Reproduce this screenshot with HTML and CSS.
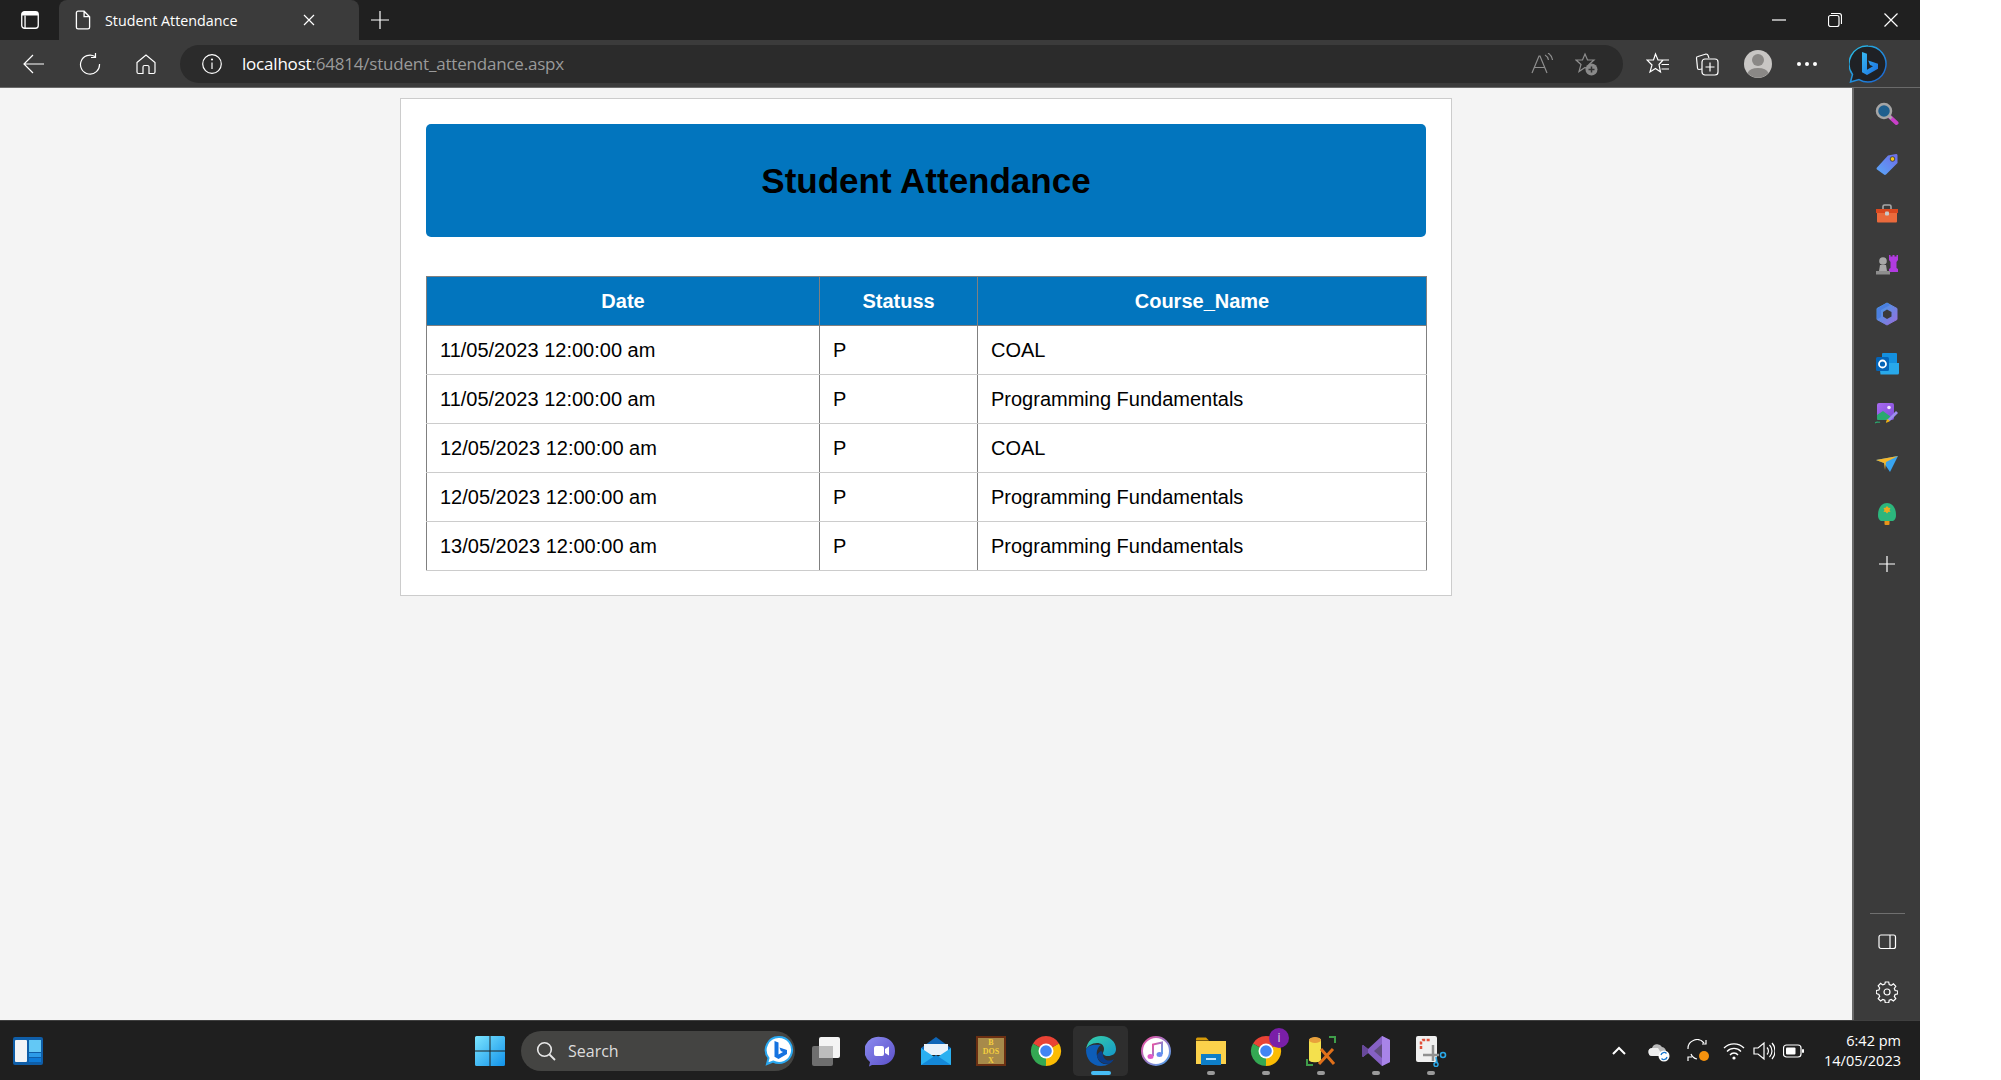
FILE: index.html
```html
<!DOCTYPE html>
<html lang="en">
<head>
<meta charset="utf-8">
<title>Student Attendance</title>
<link rel="stylesheet" href="styles.css">
</head>
<body>
<div class="window">
  <header class="titlebar">
    <div class="tab-actions">
      <svg class="ic22" viewBox="0 0 20 20"><rect x="2.5" y="2.5" width="15" height="15" rx="2.5" class="ln"/><path d="M2.5 6h15V5a2.5 2.5 0 0 0-2.5-2.500H5A2.500 2.500 0 0 0 2.500 5z" fill="#fff"/><path d="M5.500 6v11.500" class="ln"/></svg>
    </div>
    <div class="tab">
      <svg class="ic22" viewBox="0 0 20 20"><path d="M4 3.500A1.500 1.500 0 0 1 5.500 2H11l5 5v9.500a1.500 1.500 0 0 1-1.500 1.500h-9A1.500 1.500 0 0 1 4 16.500zM11 2v5h5" class="ln"/></svg>
      <span class="tab-title">Student Attendance</span>
      <svg class="tab-close" viewBox="0 0 12 12"><path d="M1 1l10 10M11 1L1 11" class="ln"/></svg>
    </div>
    <svg class="new-tab" viewBox="0 0 18 18"><path d="M9 0v18M0 9h18" class="ln"/></svg>
    <div class="win-controls">
      <span class="win-btn"><svg class="ic14" viewBox="0 0 14 14"><path d="M0 7h14" class="ln"/></svg></span>
      <span class="win-btn"><svg class="ic14" viewBox="0 0 14 14"><rect x=".5" y="2.500" width="10.500" height="11" rx="2" class="ln"/><path d="M3 .5h8a2.500 2.500 0 0 1 2.500 2.500v8" class="ln"/></svg></span>
      <span class="win-btn close"><svg class="ic14" viewBox="0 0 14 14"><path d="M.5.5l13 13M13.500.5l-13 13" class="ln"/></svg></span>
    </div>
  </header>

  <nav class="toolbar">
    <div class="nav-btns">
      <span class="nav-btn"><svg class="ic22" viewBox="0 0 22 22"><path d="M21 11H1.500M10 2l-9 9 9 9" class="ln"/></svg></span>
      <span class="nav-btn"><svg class="ic22" viewBox="0 0 22 22"><path d="M16 3.500A9.500 9.500 0 1 0 20.500 11M16.500 0v4.500H12" class="ln"/></svg></span>
      <span class="nav-btn"><svg class="ic22" viewBox="0 0 22 22"><path d="M2 9.500L11 2l9 7.500V19a1.500 1.500 0 0 1-1.500 1.500H14V14a1.500 1.500 0 0 0-1.500-1.500h-3A1.500 1.500 0 0 0 8 14v6.500H3.500A1.500 1.500 0 0 1 2 19z" class="ln"/></svg></span>
    </div>
    <div class="address">
      <svg class="ic20" viewBox="0 0 20 20"><circle cx="10" cy="10" r="9.300" class="ln"/><path d="M10 8.500V15" class="ln"/><circle cx="10" cy="5.500" r="1.100" fill="#fff"/></svg>
      <span class="url"><span class="url-host">localhost</span>:64814/student_attendance.aspx</span>
      <span class="addr-end">
        <svg class="ic22" viewBox="0 0 22 22"><path d="M1 20L8 3h1l7 17M3.500 14.500h10.500M14 2c2 1 3 2.500 3.500 5M17 0c2.500 1.500 4 4 4.500 7" class="ln dim"/></svg>
        <svg class="ic24" viewBox="0 0 24 24"><path d="M10 2l2.500 6H19l-5 4.500 1.500 6.500L10 15.500 4 19.500l2-7L1 8h6.500z" class="ln dim"/><circle cx="16.500" cy="17.500" r="6" fill="#8a8a8a"/><path d="M16.500 14.500v6M13.500 17.500h6" stroke="#333" stroke-width="1.500"/></svg>
      </span>
    </div>
    <div class="tools">
      <svg class="ic24" viewBox="0 0 24 24"><path d="M9.500 2l2.500 6H17l-4 4.500 1.500 7.500-5-3.500-5.500 3.500 2-7L1 8h6.500zM15 8h8M15.500 12.500H23M15.500 17H23" class="ln"/></svg>
      <svg class="ic24" viewBox="0 0 24 24"><path d="M7 17l-3 .5c-1 0-1.500-.5-1.500-1.500L1.500 6c0-1 .5-1.500 1.500-1.500L11 2c1 0 2 .5 2 1.500L14 6" class="ln"/><rect x="7" y="7" width="16" height="16" rx="3" class="ln"/><path d="M15 10.500v9M10.500 15h9" class="ln"/></svg>
      <svg class="avatar" viewBox="0 0 28 28"><circle cx="14" cy="14" r="14" fill="#c8c6c4"/><circle cx="14" cy="10" r="6" fill="#8a8886"/><path d="M3.500 23a11 7 0 0 1 21 0A14 14 0 0 1 3.500 23z" fill="#8a8886"/></svg>
      <span class="more"><i></i><i></i><i></i></span>
    </div>
    <svg class="bing-badge" viewBox="0 0 38 38">
      <defs>
        <linearGradient id="bb" x1="0" y1="0" x2="1" y2="1"><stop offset="0" stop-color="#29c3e8"/><stop offset="1" stop-color="#1a5fd0"/></linearGradient>
        <linearGradient id="bf" x1="0" y1="0" x2="1" y2="1"><stop offset="0" stop-color="#37b8f0"/><stop offset="1" stop-color="#1b6fe0"/></linearGradient>
      </defs>
      <path d="M19 1a18 18 0 1 1-9 33.600L1.500 37l2-7.500A18 18 0 0 1 19 1z" fill="#1f2125" stroke="url(#bb)" stroke-width="1.500"/>
      <path d="M13 7l5 1.800v16l6-3.500-3-1.400-1.800-4.500 9.800 3.400v5L18 30l-5-2.800z" fill="url(#bf)"/>
    </svg>
  </nav>

  <div class="main">
    <main class="page">
      <section class="card">
        <h1 class="card-title">Student Attendance</h1>
        <table class="grid">
          <colgroup><col class="col-date"><col class="col-status"><col class="col-course"></colgroup>
          <thead>
            <tr><th>Date</th><th>Statuss</th><th>Course_Name</th></tr>
          </thead>
          <tbody>
            <tr><td>11/05/2023 12:00:00 am</td><td>P</td><td>COAL</td></tr>
            <tr><td>11/05/2023 12:00:00 am</td><td>P</td><td>Programming Fundamentals</td></tr>
            <tr><td>12/05/2023 12:00:00 am</td><td>P</td><td>COAL</td></tr>
            <tr><td>12/05/2023 12:00:00 am</td><td>P</td><td>Programming Fundamentals</td></tr>
            <tr><td>13/05/2023 12:00:00 am</td><td>P</td><td>Programming Fundamentals</td></tr>
          </tbody>
        </table>
      </section>
    </main>

    <aside class="sidebar">
      <div class="side-list">
        <span class="side-item"><svg class="ic24" viewBox="0 0 24 24"><path d="M14.500 14.500l7 6.500" stroke="#c93fc9" stroke-width="4" stroke-linecap="round"/><path d="M14 14l2.500 2.500" stroke="#aaa" stroke-width="3"/><circle cx="9" cy="9" r="7" fill="#1f5f8e" stroke="#a5a5a5" stroke-width="2.500"/></svg></span>
        <span class="side-item"><svg class="ic24" viewBox="0 0 24 24"><defs><linearGradient id="tg" x1="0" y1="1" x2="1" y2="0"><stop offset="0" stop-color="#58a8f8"/><stop offset="1" stop-color="#6f6ce8"/></linearGradient></defs><path d="M2 15.500L13 3.500 21 2c1 0 1.500.5 1.500 1.500V11L11 22.500c-.8.500-1.500.500-2 0l-7-5c-.6-.5-.6-1.200 0-2z" fill="url(#tg)"/><circle cx="17.500" cy="7" r="2.300" fill="#f5c518" stroke="#333" stroke-width=".8"/></svg></span>
        <span class="side-item"><svg class="ic24" viewBox="0 0 24 24"><path d="M8 7V4.500A1.500 1.500 0 0 1 9.500 3h5A1.500 1.500 0 0 1 16 4.500V7" fill="none" stroke="#a8a8a8" stroke-width="1.600"/><path d="M1 7h22v4H1z" fill="#d9481f"/><path d="M2 11h20v8.500a1 1 0 0 1-1 1H3a1 1 0 0 1-1-1z" fill="#ea6a3c"/><rect x="10" y="9.500" width="4" height="4" rx="1" fill="#c9c9c9"/></svg></span>
        <span class="side-item"><svg class="ic24" viewBox="0 0 24 24"><path d="M14 3h1.500v1.500h2V3h2v1.500h2V3H23v5l-1.500 2v6l1.500 1v3h-9v-3l1.500-1v-6L14 8z" fill="#b13be0"/><circle cx="8" cy="9" r="3.800" fill="#a8a8a8"/><path d="M5 13h6l1 6H4z" fill="#a8a8a8"/><path d="M1 19h14v3.500H1z" fill="#8e8e8e"/></svg></span>
        <span class="side-item"><svg class="ic24" viewBox="0 0 24 24"><defs><linearGradient id="mg" x1="0" y1="0" x2="1" y2="1"><stop offset="0" stop-color="#3aa0e8"/><stop offset="1" stop-color="#9a6ddc"/></linearGradient></defs><path d="M12 1l10 5.500v11L12 23 2 17.500v-11z" fill="url(#mg)" stroke="url(#mg)" stroke-linejoin="round" stroke-width="1"/><path d="M12 7.500l4.500 2.500v4.500L12 17l-4-2.500V10z" fill="#3b3b3b"/><path d="M2 6.500L12 1l3 2-9 5v7l-4 2.500z" fill="#4b7fe0"/></svg></span>
        <span class="side-item"><svg class="ic24" viewBox="0 0 24 24"><rect x="7" y="1" width="15" height="12" rx="1" fill="#1490df"/><path d="M4 11h20v10a1.500 1.500 0 0 1-1.500 1.500h-17z" fill="#28a8ea"/><rect x="1" y="5" width="13" height="14" rx="1.500" fill="#0364b8"/><circle cx="7.500" cy="12" r="3.500" fill="none" stroke="#fff" stroke-width="1.800"/></svg></span>
        <span class="side-item"><svg class="ic24" viewBox="0 0 24 24"><defs><linearGradient id="ig" x1="0" y1="0" x2="1" y2="1"><stop offset="0" stop-color="#a86bf0"/><stop offset="1" stop-color="#7e4bd8"/></linearGradient></defs><rect x="2" y="1" width="17" height="17" rx="2" fill="url(#ig)"/><path d="M2 13l6-4 8 6-2 3H3.500A1.500 1.500 0 0 1 2 16.500z" fill="#2aa96f"/><circle cx="14" cy="5.500" r="1.800" fill="#f2e6ff"/><path d="M11 20l2-3 8-8 2 2-8 8z" fill="#9c8cf0"/><path d="M11 21l1-4 3 2z" fill="#f5b400"/><path d="M0 21c2-2 3 0 5-1" fill="none" stroke="#2aa96f" stroke-width="1.200"/></svg></span>
        <span class="side-item"><svg class="ic24" viewBox="0 0 24 24"><path d="M1 8l22-4-8 16-6-9z" fill="#38a4f0"/><path d="M1 8l22-4-12 6-1 8-1-7z" fill="#f5b62a"/></svg></span>
        <span class="side-item"><svg class="ic24" viewBox="0 0 24 24"><rect x="9.500" y="18" width="5" height="5" rx="1" fill="#e8941a"/><path d="M12 1c6 0 9 6 9 12 0 4-2 6-4 6H7c-2 0-4-2-4-6C3 7 6 1 12 1z" fill="#2cb67d"/><path d="M12 4l1.500 1.800L15.500 6l-1 2 1 2-2-.2L12 11.500l-1.500-1.700-2 .2 1-2-1-2 2-.2z" fill="#f0a81e"/></svg></span>
        <span class="side-item"><svg class="ic16" viewBox="0 0 16 16"><path d="M8 0v16M0 8h16" class="ln"/></svg></span>
      </div>
      <div class="side-foot">
        <hr class="side-rule">
        <span class="side-item"><svg class="ic20" viewBox="0 0 20 20"><rect x="2" y="3" width="16.500" height="13.500" rx="2" class="ln"/><path d="M13 3v13.500" class="ln"/></svg></span>
        <span class="side-item"><svg class="ic22" viewBox="0 0 22 22"><circle cx="11" cy="11" r="3" class="ln"/><path d="M9.200 1.500h3.600l.6 2.800 1.900.8 2.400-1.500 2.500 2.500-1.500 2.400.8 1.900 2.800.6-0 3.600-2.800.6-.8 1.900 1.500 2.400-2.500 2.500-2.400-1.500-1.900.8-.6 2.800" class="hidden-path"/><path d="M9.300 1h3.400l.5 2.600 2 .8 2.200-1.500 2.400 2.400-1.500 2.200.8 2-.0 0 2.600.5v2.900l-2.600.6-.8 1.900 1.500 2.200-2.400 2.400-2.200-1.500-2 .8-.5 2.600H9.300l-.5-2.600-2-.8-2.200 1.500-2.400-2.400 1.500-2.200-.8-1.900L.3 12.500V9.500l2.600-.5.8-2-1.500-2.200 2.400-2.400 2.200 1.500 2-.8z" class="ln"/></svg></span>
      </div>
    </aside>
  </div>

  <footer class="taskbar">
    <svg class="widgets" viewBox="0 0 30 28"><rect width="30" height="28" rx="2" fill="#0f5ea8"/><rect x="2" y="3" width="12" height="22" rx="1" fill="#f2f4f6"/><rect x="16" y="3" width="12" height="12" fill="#63c8f5"/><rect x="16" y="16" width="12" height="4" fill="#2c9be8"/><rect x="16" y="21" width="12" height="4" fill="#0e7bd8"/></svg>
    <div class="task-center">
      <span class="task-slot"><svg class="ic30" viewBox="0 0 30 30"><defs><linearGradient id="st" x1="0" y1="0" x2="1" y2="1"><stop offset="0" stop-color="#7ce5ff"/><stop offset="1" stop-color="#1192ea"/></linearGradient></defs><path d="M0 1.500A1.500 1.500 0 0 1 1.500 0h13v14.500H0zM15.500 0h13A1.500 1.500 0 0 1 30 1.500v13H15.500zM0 15.500h14.500V30h-13A1.500 1.500 0 0 1 0 28.500zM15.500 15.500H30v13a1.500 1.500 0 0 1-1.500 1.500h-13z" fill="url(#st)"/></svg></span>
      <div class="search">
        <svg class="ic20" viewBox="0 0 20 20"><circle cx="8.500" cy="8.500" r="6.800" fill="none" stroke="#e8e8e8" stroke-width="1.600"/><path d="M13.500 13.500l5.500 5.500" stroke="#e8e8e8" stroke-width="1.800"/></svg>
        <span class="search-label">Search</span>
        <svg class="search-bing" viewBox="0 0 30 30"><path d="M15 1a13 13 0 1 1-6 24.500L3 28l1.500-6A13 13 0 0 1 15 1z" fill="#fff" stroke="#2aa8f0" stroke-width="2"/><path d="M10.500 5l4 1.500v12l4.500-2.500-2.200-1-1.300-3.500 7.500 2.600v4L14.500 23l-4-2.200z" fill="#1573e0"/></svg>
      </div>
      <span class="task-slot"><svg class="ic32" viewBox="0 0 32 32"><rect x="9" y="2" width="21" height="21" rx="2" fill="#f4f4f4"/><rect x="2" y="11" width="21" height="20" rx="2" fill="#6e6e6e"/><rect x="9" y="11" width="14" height="12" fill="#bdbdbd"/></svg></span>
      <span class="task-slot"><svg class="ic32" viewBox="0 0 32 32"><defs><linearGradient id="ch" x1="0" y1="0" x2="1" y2="1"><stop offset="0" stop-color="#8c8cf0"/><stop offset="1" stop-color="#5a4fc8"/></linearGradient></defs><path d="M16 2a14 14 0 0 1 0 28H7l-3 1.500 1-4.500A14 14 0 0 1 16 2z" fill="url(#ch)"/><rect x="9" y="11" width="10" height="10" rx="2" fill="#fff"/><path d="M20 14l4-2.500v9L20 18z" fill="#fff"/></svg></span>
      <span class="task-slot"><svg class="ic32" viewBox="0 0 32 32"><path d="M1 13L16 2l15 11v6H1z" fill="#0f66b8"/><path d="M4 9h24v11H4z" fill="#e9f2fa"/><path d="M1 13l15 10 15-10v17H1z" fill="#2ab0f0"/><path d="M1 30l15-10 15 10z" fill="#1488d8"/></svg></span>
      <span class="task-slot"><svg class="ic32" viewBox="0 0 32 32"><rect x="1" y="1" width="30" height="30" fill="#6b2f12"/><rect x="3" y="3" width="26" height="26" fill="#a78a4a"/><text x="16" y="10" class="dos-text">B</text><text x="16" y="19" class="dos-text">DOS</text><text x="16" y="28" class="dos-text">X</text></svg></span>
      <span class="task-slot"><svg class="ic32" viewBox="0 0 32 32"><path d="M16 16L3 8.500A15 15 0 0 1 29 8.500z" fill="#ea4335"/><path d="M16 16l13-7.500A15 15 0 0 1 16 31z" fill="#fbbc04"/><path d="M16 16v15A15 15 0 0 1 3 8.500z" fill="#34a853"/><circle cx="16" cy="16" r="7.500" fill="#fff"/><circle cx="16" cy="16" r="5.800" fill="#4285f4"/></svg></span>
      <span class="task-slot active"><svg class="ic32" viewBox="0 0 32 32"><defs><linearGradient id="eg" x1="0" y1="0" x2="1" y2="1"><stop offset="0" stop-color="#36d0a8"/><stop offset="1" stop-color="#1598c9"/></linearGradient></defs><path d="M1 15C2 6 8 1 16 1c9 0 15 6 15 13 0 5-4 7-8 7-4 0-5-2-5-3 0-1 1-2 1-4 0-4-3-6-7-6-5 0-10 3-11 7z" fill="url(#eg)"/><path d="M1 15c0 9 6 16 15 16 3 0 6-1 8-2-6 1-11-2-12-8-1-5 1-9 4-11-7-1-14 0-15 5z" fill="#0d5db8"/><path d="M12 21c1 5 6 8 12 8 2-1 4-3 5-5-3 2-7 2-9 0-3-3-1-6-4-8-2 1-4 3-4 5z" fill="#0a3d8a"/></svg><i class="run-active"></i></span>
      <span class="task-slot"><svg class="ic32" viewBox="0 0 32 32"><defs><linearGradient id="it" x1="0" y1="0" x2="1" y2="1"><stop offset="0" stop-color="#f04fa0"/><stop offset="1" stop-color="#4aa8f0"/></linearGradient></defs><circle cx="16" cy="16" r="14" fill="#fff" stroke="url(#it)" stroke-width="2"/><path d="M13 21V9.500l9-2V19" fill="none" stroke="url(#it)" stroke-width="2"/><ellipse cx="10.500" cy="21.500" rx="3" ry="2.500" fill="#e05ac8"/><ellipse cx="19.500" cy="19.500" rx="3" ry="2.500" fill="#6a8cf0"/></svg></span>
      <span class="task-slot"><svg class="ic32" viewBox="0 0 32 32"><path d="M1 4a1.500 1.500 0 0 1 1.500-1.500H11l3 3h-13z" fill="#d69a08"/><path d="M1 6h30v23H1z" fill="#fbd14b"/><rect x="6" y="19" width="20" height="11" fill="#0e7ec8"/><rect x="11" y="23" width="10" height="2" fill="#bfe6ff"/></svg><i class="run"></i></span>
      <span class="task-slot"><svg class="ic32" viewBox="0 0 32 32"><path d="M16 16L3 8.500A15 15 0 0 1 29 8.500z" fill="#ea4335"/><path d="M16 16l13-7.500A15 15 0 0 1 16 31z" fill="#fbbc04"/><path d="M16 16v15A15 15 0 0 1 3 8.500z" fill="#34a853"/><circle cx="16" cy="16" r="7.500" fill="#fff"/><circle cx="16" cy="16" r="5.800" fill="#4285f4"/></svg><span class="info-badge">i</span><i class="run"></i></span>
      <span class="task-slot"><svg class="ic32" viewBox="0 0 32 32"><path d="M4 5c0-3 12-3 12 0v20c0 3-12 3-12 0z" fill="#f4e04d"/><ellipse cx="10" cy="5" rx="6" ry="3" fill="#e8a03c"/><path d="M24 2h6v6M2 24v6h6" fill="none" stroke="#3f9e4a" stroke-width="2"/><path d="M14 29L28 14M16 14l13 15" stroke="#e0701a" stroke-width="3"/></svg><i class="run"></i></span>
      <span class="task-slot"><svg class="ic32" viewBox="0 0 32 32"><path d="M22 1l8 4v22l-8 4-14-13-5 4-1-1V11l1-1 5 4z" fill="#8661c5"/><path d="M22 1l8 4v22l-8 4z" fill="#a884e8"/><path d="M22 9v14l-8-7z" fill="#3b3b3b" opacity=".5"/><path d="M3 10l5 4v4l-5 4-1-1V11z" fill="#68499b"/></svg><i class="run"></i></span>
      <span class="task-slot"><svg class="ic32" viewBox="0 0 32 32"><rect x="1" y="1" width="21" height="26" rx="2" fill="#f0f0f0"/><path d="M6 14V7a2 2 0 0 1 2-2h8" fill="none" stroke="#e0503a" stroke-width="2.500" stroke-dasharray="3 1.500"/><path d="M8 20h16M18 10v16" stroke="#909090" stroke-width="2.500"/><circle cx="28" cy="20" r="2.500" fill="none" stroke="#2aa8e8" stroke-width="1.600"/><circle cx="14" cy="30" r="0" fill="none"/><path d="M21 22l1 6" stroke="#2aa8e8" stroke-width="1.600"/><circle cx="21" cy="29.500" r="2" fill="none" stroke="#2aa8e8" stroke-width="1.500"/></svg><i class="run"></i></span>
    </div>
    <div class="tray">
      <span class="tray-slot wide"><svg class="ic16" viewBox="0 0 16 16"><path d="M2 11l6-6 6 6" fill="none" stroke="#fff" stroke-width="2"/></svg></span>
      <span class="tray-slot wide"><svg class="ic22" viewBox="0 0 22 22"><path d="M5 16a4 4 0 0 1-1-8 5.500 5.500 0 0 1 10-1 4.500 4.500 0 0 1 4 5v4z" fill="#b9b9b9"/><path d="M5 16a4 4 0 0 1-1-8l6 0 5 8z" fill="#eee"/><circle cx="16" cy="16" r="5.500" fill="#fff"/><path d="M13 15a3.200 3.200 0 0 1 5.500-1.500M19 17a3.200 3.200 0 0 1-5.500 1.500" fill="none" stroke="#1a78d0" stroke-width="1.300"/></svg></span>
      <span class="tray-slot wide"><svg class="ic24" viewBox="0 0 24 24"><path d="M1 10A9 9 0 0 1 17 4M19 1v4h-4M4 15a8 8 0 0 0 6 5M1 22v-4h4" class="ln"/><circle cx="17" cy="17" r="5" fill="#f7930e"/></svg></span>
      <span class="tray-slot"><svg class="ic22" viewBox="0 0 22 22"><path d="M1 8a14 14 0 0 1 20 0M4 11.500a9.500 9.500 0 0 1 14 0M7 15a5 5 0 0 1 8 0" fill="none" stroke="#fff" stroke-width="1.300"/><circle cx="11" cy="18" r="1.600" fill="#fff"/></svg></span>
      <span class="tray-slot"><svg class="ic22" viewBox="0 0 22 22"><path d="M1 8h4l6-5v16l-6-5H1zM14 7.500a5 5 0 0 1 0 7M16.500 5a8.500 8.500 0 0 1 0 12M19 3a12 12 0 0 1 0 16" class="ln"/></svg></span>
      <span class="tray-slot"><svg class="ic22" viewBox="0 0 22 22"><rect x=".5" y="5" width="17.500" height="12" rx="3" class="ln"/><rect x="3" y="7.500" width="9.500" height="7" rx="1" fill="#fff"/><rect x="19" y="9" width="2" height="4" rx="1" fill="#fff"/></svg></span>
      <div class="clock"><span>6:42 pm</span><span>14/05/2023</span></div>
    </div>
  </footer>
</div>
</body>
</html>
```

FILE: styles.css
```css
* { box-sizing: border-box; }
html, body { margin: 0; padding: 0; background: #fff; }
body { width: 2001px; height: 1080px; overflow: hidden; font-family: "Liberation Sans", Arial, sans-serif; }
svg { display: block; flex: none; }
.ln { fill: none; stroke: #fff; stroke-width: 1.2; }
.ln.dim { stroke: #8e8e8e; }
.hidden-path { display: none; }
.ic14 { width: 14px; height: 14px; }
.ic16 { width: 16px; height: 16px; }
.ic20 { width: 20px; height: 20px; }
.ic22 { width: 22px; height: 22px; }
.ic24 { width: 24px; height: 24px; }
.ic30 { width: 30px; height: 30px; }
.ic32 { width: 32px; height: 32px; }

.window { width: 1920px; height: 1080px; display: flex; flex-direction: column; }

.titlebar { height: 40px; background: #202020; display: flex; align-items: flex-end; color: #fff; font-family: "Open Sans", sans-serif; }
.tab-actions { width: 59px; height: 40px; display: flex; align-items: center; justify-content: center; }
.tab { width: 300px; height: 40px; background: #3b3b3b; border-radius: 8px 8px 0 0; display: flex; align-items: center; padding-left: 13px; }
.tab-title { margin-left: 11px; font-size: 14.300px; width: 198px; }
.tab-close { width: 12px; height: 12px; }
.new-tab { width: 18px; height: 18px; margin: 0 0 11px 12px; }
.win-controls { margin-left: auto; height: 40px; display: flex; align-items: center; padding-right: 1px; }
.win-btn { width: 56px; height: 40px; display: flex; align-items: center; justify-content: center; }

.toolbar { height: 48px; background: #3b3b3b; display: flex; align-items: center; border-bottom: 1px solid #6a6a6a; }
.nav-btns { width: 180px; display: flex; padding-left: 6px; }
.nav-btn { width: 56px; display: flex; justify-content: center; }
.address { width: 1443px; height: 38px; border-radius: 19px; background: #2b2b2b; display: flex; align-items: center; padding: 0 24px 0 22px; }
.url { margin-left: 20px; font: 17px "Open Sans", sans-serif; color: #9a9a9a; letter-spacing: -.2px; }
.url-host { color: #fff; }
.addr-end { margin-left: auto; display: flex; align-items: center; gap: 22px; }
.tools { width: 240px; display: flex; align-items: center; justify-content: space-between; padding: 0 46px 0 23px; }
.avatar { width: 28px; height: 28px; }
.more { display: flex; gap: 4px; }
.more i { width: 4px; height: 4px; border-radius: 50%; background: #fff; }
.bing-badge { width: 38px; height: 38px; margin-left: -14px; }

.main { flex: 1; display: flex; min-height: 0; }
.page { flex: 1; background: #f4f4f4; padding-top: 10px; }
.card { width: 1052px; height: 498px; margin: 0 auto; background: #fff; border: 1px solid #ccc; padding: 25px; }
.card-title { margin: 0 0 39px; height: 113px; line-height: 113px; background: #0275be; border-radius: 5px; text-align: center; color: #000; font-size: 35px; font-weight: 700; }

.grid { width: 1000px; border-collapse: collapse; table-layout: fixed; font-size: 20px; color: #000; }
.col-date { width: 393px; }
.col-status { width: 158px; }
.col-course { width: 449px; }
.grid th, .grid td { height: 49px; padding: 0 13px; border-left: 1px solid #808080; border-right: 1px solid #808080; }
.grid th { background: #0275be; color: #fff; font-weight: 700; text-align: center; border-top: 1px solid #808080; border-bottom: 1px solid #808080; }
.grid td { text-align: left; border-bottom: 1px solid #ccc; }

.sidebar { width: 68px; background: #3b3b3b; border-left: 2px solid #6a6a6a; display: flex; flex-direction: column; justify-content: space-between; padding: 1px 0 3px; }
.side-list { display: flex; flex-direction: column; }
.side-item { height: 50px; display: flex; align-items: center; justify-content: center; }
.side-foot { display: flex; flex-direction: column; align-items: center; }
.side-rule { width: 35px; height: 1px; margin: 0 0 3px; border: 0; background: #6f6f6f; }

.taskbar { height: 60px; background: #1f1f1f; border-top: 1px solid #3f3f3f; display: flex; align-items: center; color: #fff; }
.widgets { width: 30px; height: 28px; margin-left: 13px; }
.task-center { display: flex; align-items: center; margin-left: 419px; }
.task-slot { position: relative; width: 55px; height: 50px; display: flex; align-items: center; justify-content: center; }
.task-slot.active { background: #2e2e2e; border-radius: 5px; }
.run, .run-active { position: absolute; left: 50%; bottom: 1px; height: 4px; border-radius: 2px; transform: translateX(-50%); }
.run { width: 8px; background: #9a9a9a; }
.run-active { width: 20px; background: #47bdf5; }
.info-badge { position: absolute; left: 31px; top: 2px; width: 20px; height: 20px; border-radius: 50%; background: #7a1fa8; color: #ddd; font: 12px/20px "Open Sans", sans-serif; text-align: center; }
.dos-text { font: 700 8px "Liberation Serif", serif; fill: #f4cf3e; text-anchor: middle; }
.search { width: 274px; height: 40px; margin: 0 3px 0 4px; border-radius: 20px; background: #444442; display: flex; align-items: center; padding-left: 15px; }
.search-label { margin-left: 12px; font: 16px "Open Sans", sans-serif; color: #ddd; }
.search-bing { width: 30px; height: 30px; margin-left: auto; margin-right: 1px; }
.tray { margin-left: auto; display: flex; align-items: center; padding-right: 19px; }
.tray-slot { width: 30px; display: flex; justify-content: center; }
.tray-slot.wide { width: 40px; }
.clock { width: 92px; display: flex; flex-direction: column; align-items: flex-end; font: 14.500px/20px "Open Sans", sans-serif; color: #fff; }
```
